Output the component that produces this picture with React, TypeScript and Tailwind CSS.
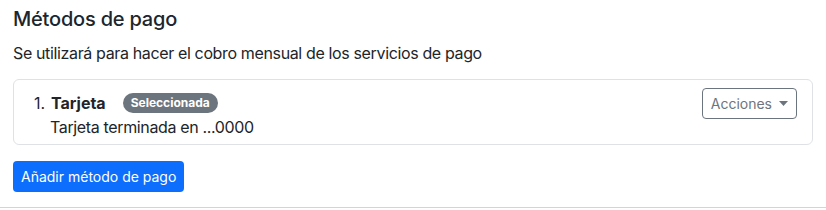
import React from "react";

export default function App() {
  return (
    <div
      className="w-[826px] h-[210px] bg-white text-[#212529] overflow-hidden"
      style={{ fontFamily: "Inter, 'Noto Sans', sans-serif" }}
    >
      <div className="h-[208px] border-b border-[#d4d4d4] px-[13px] pt-[7px]">
        <h5 className="text-[20px] leading-[24px] font-medium tracking-[-0.2px]">Métodos de pago</h5>
        <p className="mt-[10px] text-[16px] leading-[24px] tracking-[-0.36px]">
          Se utilizará para hacer el cobro mensual de los servicios de pago
        </p>
        <div className="mt-[14px] h-[66px] rounded-[6px] border border-[#dee2e6] flex items-start justify-between pl-[20px] pr-[15px] pt-[8px]">
          <div className="flex flex-col mt-[3px]">
            <div className="flex items-center h-[24px]">
              <span className="text-[16px] leading-[24px] w-[17px]">1.</span>
              <span className="text-[16px] leading-[24px] font-bold">Tarjeta</span>
              <span className="ml-[17px] inline-flex items-center h-[20px] px-[8px] rounded-full bg-[#6c757d] text-white text-[12px] font-bold leading-none">
                Seleccionada
              </span>
            </div>
            <span className="pl-[16px] text-[16px] leading-[24px] tracking-[-0.36px]">Tarjeta terminada en ...0000</span>
          </div>
          <button className="flex items-center h-[31px] px-[8px] rounded-[4px] border border-[#6c757d] text-[#6c757d] text-[14px]">
            Acciones
            <svg className="ml-[7px]" width="9" height="5" viewBox="0 0 9 5">
              <path d="M0 0h9L4.5 5z" fill="#6c757d" />
            </svg>
          </button>
        </div>
        <button className="mt-[16px] h-[31px] px-[8px] rounded-[4px] bg-[#0d6efd] text-white text-[14px] leading-[20px]">
          Añadir método de pago
        </button>
      </div>
    </div>
  );
}
